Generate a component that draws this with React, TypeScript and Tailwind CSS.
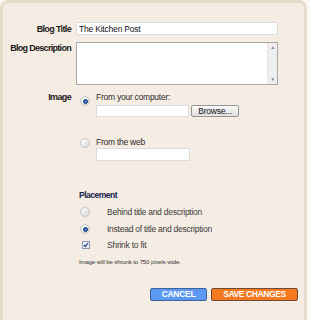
import { useState } from 'react'

function Radio({ checked }: { checked?: boolean }) {
  return (
    <span className="flex h-[10px] w-[10px] items-center justify-center rounded-full border border-[#c4c4c4] bg-gradient-to-br from-white to-[#d8d8d8]">
      {checked && <span className="h-[5px] w-[5px] rounded-full border border-[#173566] bg-[#3f78c4]" />}
    </span>
  )
}

function Checkbox() {
  return (
    <span className="flex h-[8px] w-[8px] items-center justify-center border border-[#8b98bb] bg-[#e9edf7]">
      <svg width="6" height="6" viewBox="0 0 6 6">
        <path d="M1 3 L2.4 4.6 L5 1" fill="none" stroke="#1e3c8c" strokeWidth="1.2" />
      </svg>
    </span>
  )
}

export default function App() {
  const [title] = useState('The Kitchen Post')

  return (
    <div className="h-[320px] w-[310px] bg-[#faf8f4] font-['Liberation_Sans',Arial,sans-serif] text-[8.5px] leading-[10px] tracking-[-0.25px] text-[#2a2a2a]">
      <div className="h-full w-[307px] rounded-tl-[8px] rounded-tr-[8px] border-l-[3px] border-r-[3px] border-t-[3px] border-[#e7dccb] bg-[#f5ede3] pt-[19px]">
        <div className="flex items-center">
          <label className="w-[68px] text-right text-[9px] font-bold tracking-[-0.65px] text-[#1a1a1a]">Blog Title</label>
          <input
            value={title}
            readOnly
            className="ml-[5px] h-[13px] w-[202px] border border-[#dcdcdc] bg-white px-[2px] text-[8.5px] tracking-[-0.2px] text-[#111] outline-none"
          />
        </div>

        <div className="mt-[7px] flex items-start">
          <label className="mt-[1px] w-[68px] text-right text-[9px] font-bold tracking-[-0.7px] text-[#1a1a1a]">Blog Description</label>
          <div className="ml-[5px] flex h-[43px] w-[202px] border border-[#a8a8a8] bg-white">
            <div className="flex-1" />
            <div className="flex w-[10px] flex-col items-center justify-between border-l border-[#e4e4e4] bg-[#efefef] py-[2px] text-[5px] leading-none text-[#8a8a8a]">
              <span>▲</span>
              <span>▼</span>
            </div>
          </div>
        </div>

        <div className="mt-[7px] flex items-start">
          <label className="w-[68px] text-right text-[9px] font-bold tracking-[-0.65px] text-[#1a1a1a]">Image</label>
          <div className="ml-[9px] flex flex-col">
            <div className="flex items-start">
              <span className="mt-[4px]"><Radio checked /></span>
              <div className="ml-[6px] flex flex-col">
                <span>From your computer:</span>
                <div className="mt-[3px] flex items-center gap-[2px]">
                  <div className="h-[12px] w-[93px] border border-[#dcdcdc] bg-white" />
                  <button className="h-[12px] w-[48px] rounded-[2px] border border-[#959595] bg-gradient-to-b from-[#fbfbfb] to-[#e0e0e0] text-[8.5px] leading-none tracking-[-0.2px] text-[#111]">
                    Browse...
                  </button>
                </div>
              </div>
            </div>

            <div className="mt-[20px] flex items-start">
              <span className="mt-[1px]"><Radio /></span>
              <div className="ml-[6px] flex flex-col">
                <span>From the web</span>
                <div className="mt-[1px] h-[13px] w-[94px] border border-[#dcdcdc] bg-white" />
              </div>
            </div>
          </div>
        </div>

        <div className="ml-[76px] mt-[29px] flex flex-col">
          <span className="text-[8.5px] font-bold tracking-[-0.5px] text-[#14224a]">Placement</span>
          <div className="mt-[7px] flex h-[10px] items-center">
            <span className="ml-[1px] w-[27px]"><Radio /></span>
            <span className="text-[#3a3a3a]">Behind title and description</span>
          </div>
          <div className="mt-[7px] flex h-[10px] items-center">
            <span className="ml-[1px] w-[27px]"><Radio checked /></span>
            <span className="text-[#3a3a3a]">Instead of title and description</span>
          </div>
          <div className="mt-[6px] flex h-[10px] items-center">
            <span className="ml-[3px] w-[25px]"><Checkbox /></span>
            <span className="text-[#3a3a3a]">Shrink to fit</span>
          </div>
          <span className="mt-[8px] text-[6px] leading-[8px] tracking-[-0.1px] text-[#333]">Image will be shrunk to 750 pixels wide.</span>
        </div>

        <div className="mt-[22px] flex justify-end gap-[4px] pr-[6px]">
          <button className="h-[13px] w-[57px] rounded-[2px] border border-[#3e5f9c] bg-[#5c9af2] text-[8.5px] font-bold leading-none tracking-[-0.3px] text-white">
            CANCEL
          </button>
          <button className="h-[13px] w-[87px] rounded-[2px] border border-[#6e4a36] bg-[#f47a20] text-[8.5px] font-bold leading-none tracking-[-0.4px] text-white">
            SAVE CHANGES
          </button>
        </div>
      </div>
    </div>
  )
}
